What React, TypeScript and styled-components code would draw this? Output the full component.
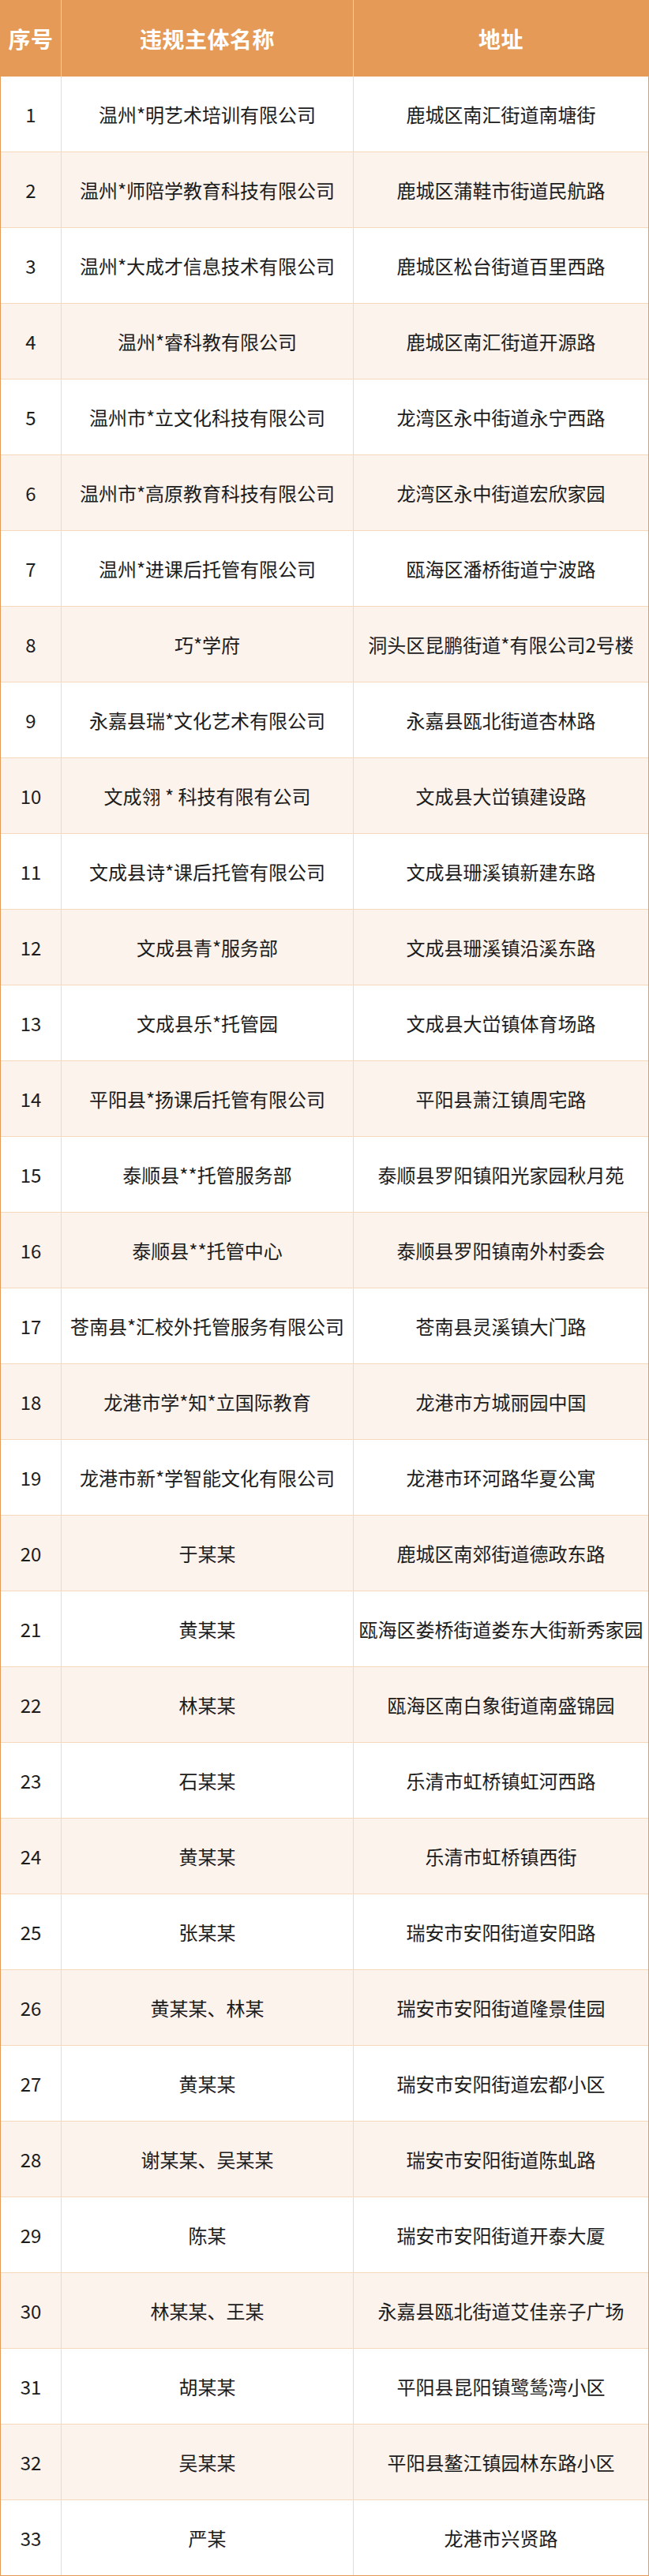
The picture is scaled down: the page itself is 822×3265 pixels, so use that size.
import React from 'react';
import styled, { createGlobalStyle } from 'styled-components';

const GlobalStyle = createGlobalStyle`
  html, body {
    margin: 0;
    padding: 0;
    background: #ffffff;
  }
  body {
    font-family: 'Noto Sans CJK SC', 'Noto Sans', sans-serif;
  }
`;

const ORANGE = '#e59b57';
const LINE = '#f6d8bb';

const Table = styled.div`
  width: 822px;
  box-sizing: border-box;
  border-left: 1px solid ${ORANGE};
  border-right: 1px solid ${ORANGE};
`;

const HeadRow = styled.div`
  display: grid;
  grid-template-columns: 77px 370px 1fr;
  height: 97px;
  background: ${ORANGE};
`;

const HeadCell = styled.div`
  display: flex;
  align-items: center;
  justify-content: center;
  color: #ffffff;
  font-size: 28px;
  font-weight: 700;
  letter-spacing: 0.5px;
  box-sizing: border-box;
  border-right: 1px solid #f3cda7;
  &:last-child {
    border-right: none;
  }
`;

const Row = styled.div<{ $alt: boolean }>`
  display: grid;
  grid-template-columns: 77px 370px 1fr;
  height: 96px;
  box-sizing: border-box;
  border-bottom: 1px solid ${LINE};
  background: ${(p) => (p.$alt ? '#fcf3ed' : '#ffffff')};
  &:last-child {
    border-bottom-color: ${ORANGE};
  }
`;

const Cell = styled.div`
  display: flex;
  align-items: center;
  justify-content: center;
  color: #1c1c1c;
  font-size: 24px;
  white-space: nowrap;
  box-sizing: border-box;
  border-right: 1px solid ${LINE};
  &:last-child {
    border-right: none;
  }
`;

const rows: [string, string][] = [
  ['温州*明艺术培训有限公司', '鹿城区南汇街道南塘街'],
  ['温州*师陪学教育科技有限公司', '鹿城区蒲鞋市街道民航路'],
  ['温州*大成才信息技术有限公司', '鹿城区松台街道百里西路'],
  ['温州*睿科教有限公司', '鹿城区南汇街道开源路'],
  ['温州市*立文化科技有限公司', '龙湾区永中街道永宁西路'],
  ['温州市*高原教育科技有限公司', '龙湾区永中街道宏欣家园'],
  ['温州*进课后托管有限公司', '瓯海区潘桥街道宁波路'],
  ['巧*学府', '洞头区昆鹏街道*有限公司2号楼'],
  ['永嘉县瑞*文化艺术有限公司', '永嘉县瓯北街道杏林路'],
  ['文成翎 * 科技有限有公司', '文成县大峃镇建设路'],
  ['文成县诗*课后托管有限公司', '文成县珊溪镇新建东路'],
  ['文成县青*服务部', '文成县珊溪镇沿溪东路'],
  ['文成县乐*托管园', '文成县大峃镇体育场路'],
  ['平阳县*扬课后托管有限公司', '平阳县萧江镇周宅路'],
  ['泰顺县**托管服务部', '泰顺县罗阳镇阳光家园秋月苑'],
  ['泰顺县**托管中心', '泰顺县罗阳镇南外村委会'],
  ['苍南县*汇校外托管服务有限公司', '苍南县灵溪镇大门路'],
  ['龙港市学*知*立国际教育', '龙港市方城丽园中国'],
  ['龙港市新*学智能文化有限公司', '龙港市环河路华夏公寓'],
  ['于某某', '鹿城区南郊街道德政东路'],
  ['黄某某', '瓯海区娄桥街道娄东大街新秀家园'],
  ['林某某', '瓯海区南白象街道南盛锦园'],
  ['石某某', '乐清市虹桥镇虹河西路'],
  ['黄某某', '乐清市虹桥镇西街'],
  ['张某某', '瑞安市安阳街道安阳路'],
  ['黄某某、林某', '瑞安市安阳街道隆景佳园'],
  ['黄某某', '瑞安市安阳街道宏都小区'],
  ['谢某某、吴某某', '瑞安市安阳街道陈虬路'],
  ['陈某', '瑞安市安阳街道开泰大厦'],
  ['林某某、王某', '永嘉县瓯北街道艾佳亲子广场'],
  ['胡某某', '平阳县昆阳镇鹭鸶湾小区'],
  ['吴某某', '平阳县鳌江镇园林东路小区'],
  ['严某', '龙港市兴贤路'],
];

export default function App() {
  return (
    <>
      <GlobalStyle />
      <Table>
        <HeadRow>
          <HeadCell>序号</HeadCell>
          <HeadCell>违规主体名称</HeadCell>
          <HeadCell>地址</HeadCell>
        </HeadRow>
        {rows.map(([name, addr], i) => (
          <Row key={i} $alt={i % 2 === 1}>
            <Cell>{i + 1}</Cell>
            <Cell>{name}</Cell>
            <Cell>{addr}</Cell>
          </Row>
        ))}
      </Table>
    </>
  );
}
